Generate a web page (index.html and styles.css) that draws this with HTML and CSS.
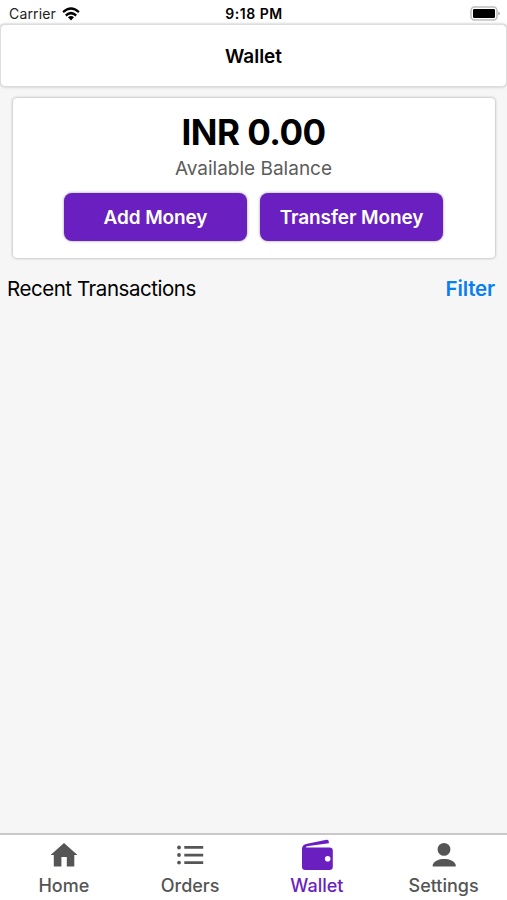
FILE: index.html
```html
<!DOCTYPE html>
<html lang="en">
<head>
<meta charset="utf-8">
<title>Wallet</title>
<link rel="stylesheet" href="styles.css">
</head>
<body>
<div class="status">
  <div class="carrier"><span>Carrier</span>
    <svg width="18" height="14" viewBox="0 0 20 14" preserveAspectRatio="none"><g fill="none" stroke="#000" stroke-width="2.5"><path d="M1.2 5.1Q10-2.2 18.8 5.1"/><path d="M4.2 8.4Q10 3.8 15.8 8.4"/></g><path d="M6.7 10.3Q10 7.8 13.3 10.3L10 13.6Z"/></svg>
  </div>
  <div class="time">9:18 PM</div>
  <svg class="battery" width="31" height="15" viewBox="0 0 31 15"><rect x="1" y="1" width="26" height="13" rx="3.5" fill="#fff" stroke="#bdbdbd" stroke-width="1.5"/><rect x="3" y="3" width="22" height="9" rx="1.2"/><path d="M28.3 5.5q3.4 2 0 4z" fill="#aaa"/></svg>
</div>
<header class="header"><h1>Wallet</h1></header>
<main>
  <section class="card">
    <div class="amount">INR 0.00</div>
    <div class="label">Available Balance</div>
    <div class="actions"><button>Add Money</button><button>Transfer Money</button></div>
  </section>
  <div class="recent"><span class="title">Recent Transactions</span><a class="filter">Filter</a></div>
</main>
<nav>
  <a><svg width="34" height="34" viewBox="0 0 34 34"><path d="M18 5L31.5 17H28.3V28.5H20.8V19H15.4V28.5H7.8V17H4.6Z"/></svg><span class="home">Home</span></a>
  <a><svg width="34" height="34" viewBox="0 0 34 34"><circle cx="6" cy="9.5" r="1.9"/><circle cx="6" cy="17" r="1.9"/><circle cx="6" cy="24.6" r="1.9"/><path d="M11.3 8.1h18.9v2.7H11.3zM11.3 15.7h18.9v2.7H11.3zM11.3 23.2h18.9v2.7H11.3z"/></svg><span>Orders</span></a>
  <a class="active"><svg width="34" height="34" viewBox="0 0 34 34"><path fill-rule="evenodd" d="M2 11Q2 6.8 6 5.9L26.5 1.8Q29 1.4 28.9 5.2L8.5 8Q5.2 8.5 6 9.5H29.5Q32.8 9.5 32.8 12.8V28.7Q32.8 32 29.5 32H5.3Q2 32 2 28.7ZM27.7 18A2.8 2.8 0 1 0 27.7 23.6A2.8 2.8 0 1 0 27.7 18Z"/><path d="M6 8.7L29 6.2V8.8Z" fill="#fff"/></svg><span>Wallet</span></a>
  <a><svg width="34" height="34" viewBox="0 0 34 34"><circle cx="17" cy="11.4" r="6.4"/><path d="M5.7 28.6V26.8C7 22.8 12 21 17.2 21S27.4 22.8 28.7 26.8V28.6Z"/></svg><span>Settings</span></a>
</nav>
</body>
</html>
```
FILE: styles.css
```css
* { box-sizing: border-box; }
body { margin: 0; height: 900px; display: flex; flex-direction: column; background: #f6f6f6; font-family: Inter, sans-serif; color: #000; overflow: hidden; }
.status { height: 24px; background: #fff; display: grid; grid-template-columns: 1fr auto 1fr; align-items: center; padding: 3px 6px 0 9px; font-size: 14px; flex: none; }
.carrier { display: flex; align-items: center; gap: 6px; color: #222; letter-spacing: .15px; }
.time { font-weight: 600; letter-spacing: .5px; margin-left: -2px; }
.battery { justify-self: end; }
.header { height: 63px; background: #fff; border: 1px solid #ddd; border-radius: 5px; box-shadow: 0 0 3px #bbb; display: flex; align-items: center; justify-content: center; flex: none; padding-top: 1px; }
h1 { margin: 0; font-size: 19px; font-weight: 600; }
main { flex: 1; padding-top: 11px; }
.card { margin: 0 12px 0 13px; height: 160px; background: #fff; border-radius: 4px; box-shadow: 0 0 3px #999; text-align: center; padding: 12px 1px 0 0; }
.amount { font-size: 35px; line-height: 44px; font-weight: 700; letter-spacing: -.5px; }
.label { font-size: 19px; line-height: 28px; color: #5c5c5c; padding-top: 1px; }
.actions { display: flex; justify-content: center; gap: 13px; margin-top: 10px; }
button { width: 183px; height: 48px; border: 0; border-radius: 8px; background: #6a1fc0; color: #fff; font: 600 19px Inter, sans-serif; letter-spacing: -.1px; padding: 0; box-shadow: 0 0 3px #999; }
.recent { display: flex; justify-content: space-between; padding: 18px 12px 0 7px; font-size: 20.5px; line-height: 26px; letter-spacing: -.45px; }
.filter { color: #087fee; font-weight: 600; letter-spacing: -.15px; }
nav { height: 67px; background: #fff; border-top: 2px solid #c8c8c8; display: grid; grid-template-columns: repeat(4, 1fr); flex: none; }
nav a { display: flex; flex-direction: column; align-items: center; gap: 2px; font-size: 18px; line-height: 24px; font-weight: 500; color: #555; padding-top: 3px; }
nav svg { fill: #555; flex: none; }
.home { padding-left: 1px; }
nav .active { color: #6a1fc0; }
.active svg { fill: #6a1fc0; }
```
